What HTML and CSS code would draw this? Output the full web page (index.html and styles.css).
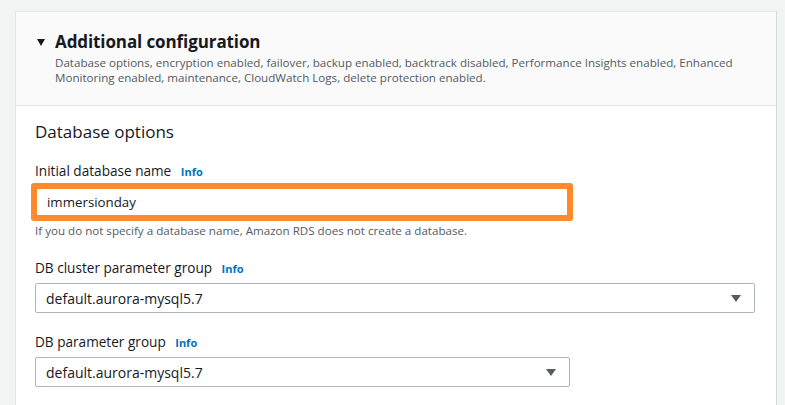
FILE: index.html
```html
<!DOCTYPE html>
<html>
<head>
<meta charset="utf-8">
<link rel="stylesheet" href="styles.css">
</head>
<body>
<div class="panel">
  <div class="panel-header">
    <div class="title-row">
      <span class="caret"></span>
      <h2 class="title">Additional configuration</h2>
    </div>
    <p class="desc">Database options, encryption enabled, failover, backup enabled, backtrack disabled, Performance Insights enabled, Enhanced Monitoring enabled, maintenance, CloudWatch Logs, delete protection enabled.</p>
  </div>
  <div class="panel-body">
    <h3 class="section-title">Database options</h3>

    <div class="field">
      <div class="label">Initial database name <span class="info">Info</span></div>
      <div class="input highlighted">immersionday</div>
      <div class="hint">If you do not specify a database name, Amazon RDS does not create a database.</div>
    </div>

    <div class="field">
      <div class="label">DB cluster parameter group <span class="info">Info</span></div>
      <div class="select wide"><span>default.aurora-mysql5.7</span><span class="arrow"></span></div>
    </div>

    <div class="field">
      <div class="label">DB parameter group <span class="info">Info</span></div>
      <div class="select narrow"><span>default.aurora-mysql5.7</span><span class="arrow"></span></div>
    </div>
  </div>
</div>
</body>
</html>
```
FILE: styles.css
```css
html, body {
  margin: 0;
  padding: 0;
  background: #f2f3f3;
  font-family: "Open Sans", "Noto Sans", sans-serif;
  color: #16191f;
}
.panel {
  margin: 11px 0 0 15px;
  width: 760px;
  border-left: 1px solid #e4e7e7;
  border-top: 1px solid #e4e7e7;
  border-right: 1px solid #d5dbdb;
  background: #fff;
  height: 400px;
}
.panel-header {
  background: #fafafa;
  border-bottom: 1px solid #e4e7e7;
  padding: 18px 20px 0 21px;
  height: 75px;
}
.title-row {
  display: flex;
  align-items: center;
  gap: 10px;
}
.caret {
  width: 0;
  height: 0;
  border-left: 4px solid transparent;
  border-right: 4px solid transparent;
  border-top: 7px solid #16191f;
  margin-top: 1px;
}
.title {
  margin: 0;
  font-size: 17px;
  font-weight: 700;
  line-height: 24px;
  letter-spacing: -0.1px;
}
.desc {
  margin: 1px 0 0 18px;
  font-size: 11.6px;
  line-height: 15px;
  color: #545b64;
}
.panel-body {
  padding: 15px 20px 0 19px;
}
.section-title {
  margin: 0 0 19px 0;
  font-size: 17px;
  font-weight: 400;
  line-height: 22px;
}
.field {
  margin-bottom: 20px;
}
.label {
  font-size: 13.6px;
  line-height: 18px;
  margin-bottom: 5px;
}
.info {
  color: #0073bb;
  font-weight: 700;
  font-size: 11px;
  margin-left: 6px;
}
.input {
  box-sizing: border-box;
  height: 38px;
  width: 542px;
  margin: -3px 0 0 -4px;
  border: 6px solid #ff8a2d;
  border-radius: 3px;
  font-size: 13.3px;
  line-height: 26px;
  padding-left: 10px;
}
.hint {
  font-size: 11.6px;
  color: #545b64;
  margin-top: 2px;
  line-height: 16px;
}
.select {
  box-sizing: border-box;
  height: 30px;
  border: 1px solid #aab7b8;
  border-radius: 2px;
  display: flex;
  align-items: center;
  justify-content: space-between;
  padding: 0 13px 0 10px;
  font-size: 14px;
}
.select.wide { width: 720px; }
.select.narrow { width: 535px; }
.arrow {
  width: 0;
  height: 0;
  border-left: 5px solid transparent;
  border-right: 5px solid transparent;
  border-top: 7px solid #545b64;
}
```
